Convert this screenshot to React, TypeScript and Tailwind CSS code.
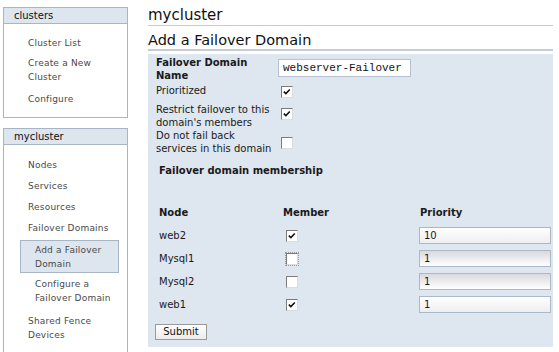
import React from "react"

const Check = ({ on, dotted }: { on?: boolean; dotted?: boolean }) => (
  <span
    className={`relative block h-[12px] w-[12px] border border-t-[#7b7b7b] border-l-[#7b7b7b] border-b-[#dcdcdc] border-r-[#dcdcdc] bg-white ${
      dotted ? "outline outline-1 outline-dotted outline-[#9a9a9a]" : ""
    }`}
  >
    {on && (
      <svg viewBox="0 0 10 10" className="absolute left-[1px] top-[1px] h-[8px] w-[8px]">
        <path d="M1 4.5 L3.6 7 L8.5 1.8" fill="none" stroke="#111" strokeWidth="2" />
      </svg>
    )}
  </span>
)

const SideItem = ({ children, indent }: { children: React.ReactNode; indent?: boolean }) => (
  <div className={`leading-[14px] ${indent ? "pl-[31px]" : "pl-[24px]"}`}>{children}</div>
)

export default function App() {
  const rows = [
    { node: "web2", member: true, prio: "10", shade: false },
    { node: "Mysql1", member: false, prio: "1", shade: true, dotted: true },
    { node: "Mysql2", member: false, prio: "1", shade: true },
    { node: "web1", member: true, prio: "1", shade: false },
  ]

  return (
    <div className="flex h-[352px] w-[559px] overflow-hidden bg-white pl-[3px] pt-[7px] font-['DejaVu_Sans',sans-serif] text-[#1a1a1a]">
      {/* sidebar */}
      <div className="flex w-[125px] shrink-0 flex-col gap-[10px] text-[9px] tracking-[0.2px] text-[#4a4a4a]">
        <div className="h-[111px] border border-[#a7b5c4]">
          <div className="h-[16px] border-b border-[#a7b5c4] bg-[#dde5ee] pl-[10px] text-[10px] leading-[15px] tracking-normal text-[#111]">
            clusters
          </div>
          <div className="flex flex-col pt-[12px]">
            <SideItem>Cluster List</SideItem>
            <div className="mt-[6px]">
              <SideItem>
                Create a New
                <br />
                Cluster
              </SideItem>
            </div>
            <div className="mt-[8px]">
              <SideItem>Configure</SideItem>
            </div>
          </div>
        </div>

        <div className="flex-1 border border-b-0 border-[#a7b5c4]">
          <div className="h-[16px] border-b border-[#a7b5c4] bg-[#dde5ee] pl-[10px] text-[10px] leading-[15px] tracking-normal text-[#111]">
            mycluster
          </div>
          <div className="flex flex-col gap-[7px] pt-[13px]">
            <SideItem>Nodes</SideItem>
            <SideItem>Services</SideItem>
            <SideItem>Resources</SideItem>
            <SideItem>Failover Domains</SideItem>
          </div>
          <div className="ml-[16px] mt-[5px] w-[99px] border border-[#a7b5c4] bg-[#dde5ee] pb-[1px] pl-[14px] pt-[2px] leading-[14px]">
            Add a Failover
            <br />
            Domain
          </div>
          <div className="mt-[4px]">
            <SideItem indent>
              Configure a
              <br />
              Failover Domain
            </SideItem>
          </div>
          <div className="mt-[9px]">
            <SideItem>
              Shared Fence
              <br />
              Devices
            </SideItem>
          </div>
        </div>
      </div>

      {/* main */}
      <div className="ml-[20px] flex w-[405px] shrink-0 flex-col">
        <h1 className="h-[19px] border-b border-[#c4ccd6] text-[15px] leading-[17px] text-[#111]">mycluster</h1>
        <h2 className="mt-[5px] h-[20px] border-b-2 border-[#c4ccd6] text-[14.5px] leading-[19px] text-[#111]">
          Add a Failover Domain
        </h2>

        <div className="mt-[3px] flex flex-col bg-[#dee6ef] pb-[7px] pl-[8px] pt-[2px] text-[10px]">
          <div className="flex h-[28px]">
            <div className="w-[122px] font-bold leading-[13px]">
              Failover Domain
              <br />
              Name
            </div>
            <div className="mt-[3px] flex h-[18px] w-[133px] items-center overflow-hidden whitespace-nowrap border border-[#b6c2cf] bg-white pl-[4px] font-['Liberation_Mono',monospace] text-[11px] text-[#111]">
              webserver-Failover
            </div>
          </div>
          <div className="flex h-[19px]">
            <div className="w-[125px] leading-[13px]">Prioritized</div>
            <div className="mt-[2px]">
              <Check on />
            </div>
          </div>
          <div className="flex h-[26px]">
            <div className="w-[125px] leading-[13px]">
              Restrict failover to this
              <br />
              domain's members
            </div>
            <div className="mt-[5px]">
              <Check on />
            </div>
          </div>
          <div className="flex h-[26px]">
            <div className="w-[125px] leading-[13px]">
              Do not fail back
              <br />
              services in this domain
            </div>
            <div className="mt-[8px]">
              <Check />
            </div>
          </div>

          <div className="ml-[3px] mt-[9px] font-bold leading-[13px]">Failover domain membership</div>

          <div className="ml-[3px] mt-[25px] grid grid-cols-[124px_136px_132px] items-center">
            <div className="h-[22px] font-bold leading-[22px]">Node</div>
            <div className="h-[22px] font-bold leading-[22px]">Member</div>
            <div className="h-[22px] pl-[1px] font-bold leading-[22px]">Priority</div>
            {rows.map((r) => (
              <React.Fragment key={r.node}>
                <div className="flex h-[23px] items-center">{r.node}</div>
                <div className="flex h-[23px] items-center pl-[3px]">
                  <Check on={r.member} dotted={r.dotted} />
                </div>
                <div className="flex h-[23px] items-center">
                  <div
                    className={`flex h-[17px] w-[132px] items-center border border-[#a9b9c8] pl-[4px] ${
                      r.shade
                        ? "bg-gradient-to-b from-[#d9d9de] to-white"
                        : "bg-gradient-to-b from-white to-[#eeeef1]"
                    }`}
                  >
                    {r.prio}
                  </div>
                </div>
              </React.Fragment>
            ))}
          </div>

          <div className="mt-[8px]">
            <button className="-ml-[1px] h-[16px] w-[52px] border border-[#9a9a9a] bg-gradient-to-b from-white to-[#ececec] text-[10px] leading-[14px] text-[#111]">
              Submit
            </button>
          </div>
        </div>
      </div>
    </div>
  )
}
